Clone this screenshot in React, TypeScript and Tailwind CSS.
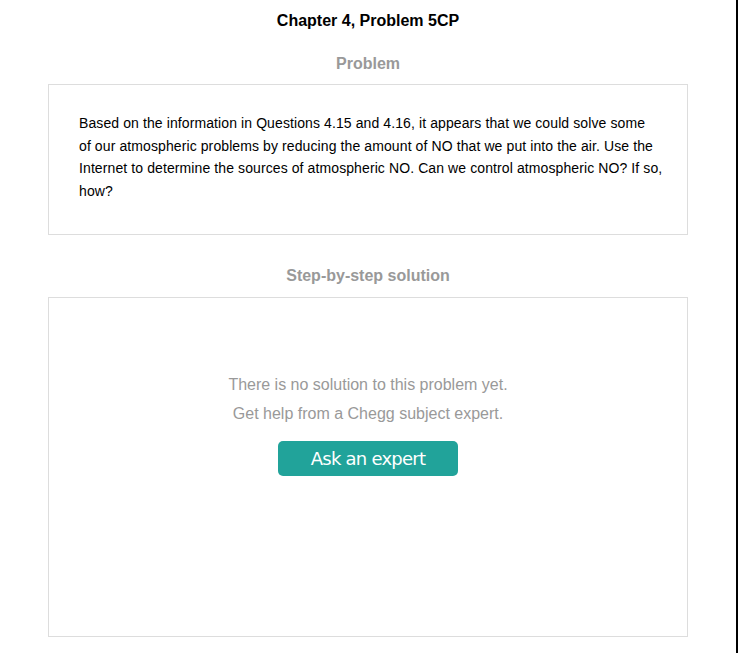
import React from "react";

export default function App() {
  return (
    <div
      className="w-[738px] h-[653px] bg-white border-r-2 border-black overflow-hidden"
      style={{ fontFamily: '"Liberation Sans", Arial, sans-serif' }}
    >
      <h1 className="pt-[12px] text-center text-[16px] leading-[18px] font-bold text-black">
        Chapter 4, Problem 5CP
      </h1>
      <h2 className="mt-[25px] text-center text-[16px] leading-[18px] font-bold text-[#999999]">
        Problem
      </h2>
      <div className="mx-[48px] mt-[11px] h-[151px] border border-[#dddddd] pt-[27px] pl-[30px] pr-[20px]">
        <p className="text-[14px] leading-[22.5px] tracking-[0.1px] text-black">
          Based on the information in Questions 4.15 and 4.16, it appears that we could solve some
          <br />
          of our atmospheric problems by reducing the amount of NO that we put into the air. Use the
          <br />
          Internet to determine the sources of atmospheric NO. Can we control atmospheric NO? If so,
          <br />
          how?
        </p>
      </div>
      <h2 className="mt-[32px] text-center text-[16px] leading-[18px] font-bold text-[#999999]">
        Step-by-step solution
      </h2>
      <div className="mx-[48px] mt-[12px] h-[340px] border border-[#dddddd] pt-[72px] flex flex-col items-center">
        <p className="text-[16px] leading-[29px] text-[#999999] text-center">
          There is no solution to this problem yet.
          <br />
          Get help from a Chegg subject expert.
        </p>
        <button
          className="mt-[13px] w-[180px] h-[35px] rounded-[5px] bg-[#21a39a] text-white text-[18px] leading-[35px]"
          style={{ fontFamily: '"DejaVu Sans", Tahoma, sans-serif', letterSpacing: "-0.75px" }}
        >
          Ask an expert
        </button>
      </div>
    </div>
  );
}
